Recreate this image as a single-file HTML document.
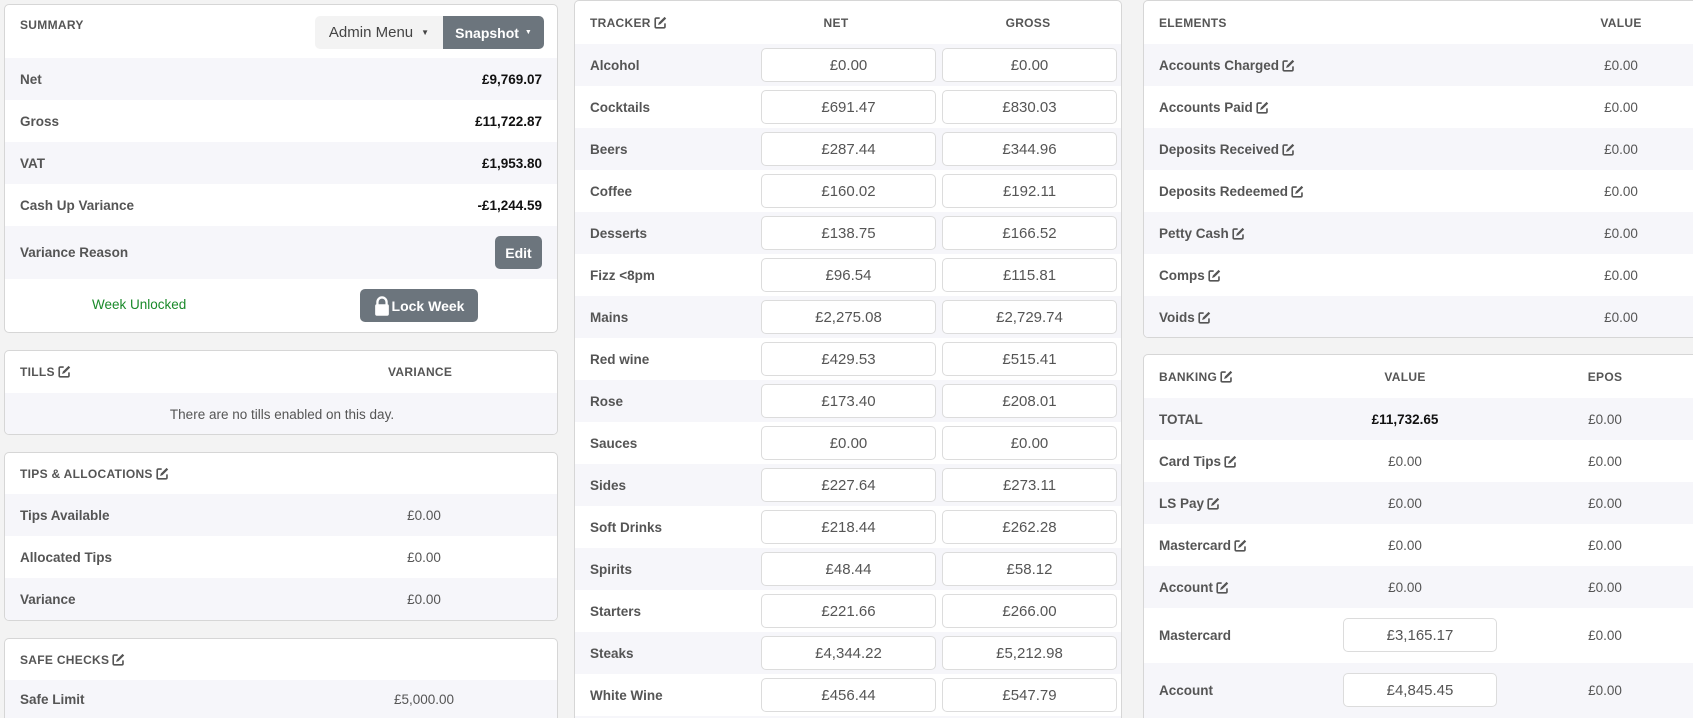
<!DOCTYPE html>
<html style="overflow:hidden;width:1693px;height:718px"><head><meta charset="utf-8"><style>
*{box-sizing:border-box;margin:0;padding:0}
body{width:1693px;height:718px;overflow:hidden;background:#f3f3f3;font-family:"Liberation Sans",sans-serif;color:#555;position:relative}
#wrap{position:absolute;left:0;top:0;width:1693px;height:718px;overflow:hidden}
.card{position:absolute;background:#fff;border:1px solid #d6d6d6;border-radius:5px;overflow:hidden}
.open{border-bottom:none;border-radius:5px 5px 0 0}
.row{position:absolute;left:0;right:0;height:42px;display:flex;align-items:center}
.s{background:#f6f6fa}
.lbl{position:absolute;left:15px;font-weight:bold;font-size:13.5px;color:#555;white-space:nowrap}
.hd{position:absolute;font-weight:bold;font-size:12px;color:#555;letter-spacing:.3px;white-space:nowrap}
.v{position:absolute;font-size:13.5px;color:#555;white-space:nowrap;transform:translateX(-50%)}
.vr{position:absolute;right:15px;font-weight:bold;font-size:13.5px;color:#111}
.inp{position:absolute;top:4px;height:34px;border:1px solid #dcdcdc;border-radius:5px;background:#fff;font-size:15px;color:#555;display:flex;align-items:center;justify-content:center}
.btn{position:absolute;border-radius:5px;background:#6c757d;color:#fff;font-weight:bold;font-size:14px;display:flex;align-items:center;justify-content:center}
svg.e{width:13px;height:13px;vertical-align:-2px;margin-left:3px}
</style></head><body><div id="wrap">
<svg width="0" height="0" style="position:absolute"><defs><symbol id="ed" viewBox="0 0 16 16"><path d="M7 2.5H3a1.5 1.5 0 0 0-1.5 1.5v9A1.5 1.5 0 0 0 3 14.5h9a1.5 1.5 0 0 0 1.5-1.5V9" fill="none" stroke="#555" stroke-width="2"/><path d="M13 1l2 2-7 7-3 1 1-3z" fill="#555"/></symbol></defs></svg>

<div class="card" style="left:4px;top:4px;width:554px;height:329px">
 <div class="hd" style="left:15px;top:13px">SUMMARY</div>
 <div style="position:absolute;left:310px;top:11px;width:128px;height:33px;background:#f3f3f3;border-radius:5px 0 0 5px;font-size:15px;color:#444;display:flex;align-items:center;justify-content:center">Admin Menu <span style="font-size:8px;margin-left:8px">▼</span></div>
 <div class="btn" style="left:438px;top:11px;width:101px;height:33px;border-radius:0 5px 5px 0">Snapshot <span style="font-size:7px;margin-left:6px">▼</span></div>
 <div class="row s" style="top:53px"><span class="lbl">Net</span><span class="vr">£9,769.07</span></div>
 <div class="row" style="top:95px"><span class="lbl">Gross</span><span class="vr">£11,722.87</span></div>
 <div class="row s" style="top:137px"><span class="lbl">VAT</span><span class="vr">£1,953.80</span></div>
 <div class="row" style="top:179px"><span class="lbl">Cash Up Variance</span><span class="vr">-£1,244.59</span></div>
 <div class="row s" style="top:221px;height:53px"><span class="lbl">Variance Reason</span><div class="btn" style="right:15px;top:10px;width:47px;height:33px">Edit</div></div>
 <div style="position:absolute;left:87px;top:292px;font-size:13.5px;color:#1a8a2a">Week Unlocked</div>
 <div class="btn" style="left:355px;top:284px;width:118px;height:33px"><svg width="16" height="20" viewBox="0 0 14 17" style="margin-right:2px"><path d="M3 8V5a4 4 0 0 1 8 0v3" fill="none" stroke="#fff" stroke-width="2"/><rect x="1" y="7" width="12" height="10" rx="1.5" fill="#fff"/></svg>Lock Week</div>
</div>

<div class="card" style="left:4px;top:350px;width:554px;height:85px">
 <div class="hd" style="left:15px;top:14px">TILLS<svg class="e"><use href="#ed"/></svg></div>
 <div class="hd" style="left:383px;top:14px">VARIANCE</div>
 <div class="row s" style="top:42px"><span class="v" style="left:277px;font-size:13.5px">There are no tills enabled on this day.</span></div>
</div>

<div class="card" style="left:4px;top:452px;width:554px;height:169px">
 <div class="hd" style="left:15px;top:14px">TIPS &amp; ALLOCATIONS<svg class="e"><use href="#ed"/></svg></div>
 <div class="row s" style="top:41px"><span class="lbl">Tips Available</span><span class="v" style="left:419px">£0.00</span></div>
 <div class="row" style="top:83px"><span class="lbl">Allocated Tips</span><span class="v" style="left:419px">£0.00</span></div>
 <div class="row s" style="top:125px"><span class="lbl">Variance</span><span class="v" style="left:419px">£0.00</span></div>
</div>

<div class="card open" style="left:4px;top:638px;width:554px;height:80px">
 <div class="hd" style="left:15px;top:14px">SAFE CHECKS<svg class="e"><use href="#ed"/></svg></div>
 <div class="row s" style="top:41px;height:39px"><span class="lbl">Safe Limit</span><span class="v" style="left:419px">£5,000.00</span></div>
</div>

<div class="card open" style="left:574px;top:0px;width:548px;height:718px">
 <div class="hd" style="left:15px;top:15px">TRACKER<svg class="e"><use href="#ed"/></svg></div>
 <div class="hd" style="left:261px;top:15px;transform:translateX(-50%)">NET</div>
 <div class="hd" style="left:453px;top:15px;transform:translateX(-50%)">GROSS</div>
 <div class="row s" style="top:43px"><span class="lbl">Alcohol</span><div class="inp" style="left:186px;width:175px">£0.00</div><div class="inp" style="left:367px;width:175px">£0.00</div></div>
 <div class="row" style="top:85px"><span class="lbl">Cocktails</span><div class="inp" style="left:186px;width:175px">£691.47</div><div class="inp" style="left:367px;width:175px">£830.03</div></div>
 <div class="row s" style="top:127px"><span class="lbl">Beers</span><div class="inp" style="left:186px;width:175px">£287.44</div><div class="inp" style="left:367px;width:175px">£344.96</div></div>
 <div class="row" style="top:169px"><span class="lbl">Coffee</span><div class="inp" style="left:186px;width:175px">£160.02</div><div class="inp" style="left:367px;width:175px">£192.11</div></div>
 <div class="row s" style="top:211px"><span class="lbl">Desserts</span><div class="inp" style="left:186px;width:175px">£138.75</div><div class="inp" style="left:367px;width:175px">£166.52</div></div>
 <div class="row" style="top:253px"><span class="lbl">Fizz &lt;8pm</span><div class="inp" style="left:186px;width:175px">£96.54</div><div class="inp" style="left:367px;width:175px">£115.81</div></div>
 <div class="row s" style="top:295px"><span class="lbl">Mains</span><div class="inp" style="left:186px;width:175px">£2,275.08</div><div class="inp" style="left:367px;width:175px">£2,729.74</div></div>
 <div class="row" style="top:337px"><span class="lbl">Red wine</span><div class="inp" style="left:186px;width:175px">£429.53</div><div class="inp" style="left:367px;width:175px">£515.41</div></div>
 <div class="row s" style="top:379px"><span class="lbl">Rose</span><div class="inp" style="left:186px;width:175px">£173.40</div><div class="inp" style="left:367px;width:175px">£208.01</div></div>
 <div class="row" style="top:421px"><span class="lbl">Sauces</span><div class="inp" style="left:186px;width:175px">£0.00</div><div class="inp" style="left:367px;width:175px">£0.00</div></div>
 <div class="row s" style="top:463px"><span class="lbl">Sides</span><div class="inp" style="left:186px;width:175px">£227.64</div><div class="inp" style="left:367px;width:175px">£273.11</div></div>
 <div class="row" style="top:505px"><span class="lbl">Soft Drinks</span><div class="inp" style="left:186px;width:175px">£218.44</div><div class="inp" style="left:367px;width:175px">£262.28</div></div>
 <div class="row s" style="top:547px"><span class="lbl">Spirits</span><div class="inp" style="left:186px;width:175px">£48.44</div><div class="inp" style="left:367px;width:175px">£58.12</div></div>
 <div class="row" style="top:589px"><span class="lbl">Starters</span><div class="inp" style="left:186px;width:175px">£221.66</div><div class="inp" style="left:367px;width:175px">£266.00</div></div>
 <div class="row s" style="top:631px"><span class="lbl">Steaks</span><div class="inp" style="left:186px;width:175px">£4,344.22</div><div class="inp" style="left:367px;width:175px">£5,212.98</div></div>
 <div class="row" style="top:673px"><span class="lbl">White Wine</span><div class="inp" style="left:186px;width:175px">£456.44</div><div class="inp" style="left:367px;width:175px">£547.79</div></div>
 <div class="row s" style="top:715px;height:3px"></div>
</div>

<div class="card" style="left:1143px;top:0px;width:550px;height:338px;border-right:none;border-radius:5px 0 0 5px">
 <div class="hd" style="left:15px;top:15px">ELEMENTS</div>
 <div class="hd" style="left:477px;top:15px;transform:translateX(-50%)">VALUE</div>
 <div class="row s" style="top:43px"><span class="lbl">Accounts Charged<svg class="e"><use href="#ed"/></svg></span><span class="v" style="left:477px">£0.00</span></div>
 <div class="row" style="top:85px"><span class="lbl">Accounts Paid<svg class="e"><use href="#ed"/></svg></span><span class="v" style="left:477px">£0.00</span></div>
 <div class="row s" style="top:127px"><span class="lbl">Deposits Received<svg class="e"><use href="#ed"/></svg></span><span class="v" style="left:477px">£0.00</span></div>
 <div class="row" style="top:169px"><span class="lbl">Deposits Redeemed<svg class="e"><use href="#ed"/></svg></span><span class="v" style="left:477px">£0.00</span></div>
 <div class="row s" style="top:211px"><span class="lbl">Petty Cash<svg class="e"><use href="#ed"/></svg></span><span class="v" style="left:477px">£0.00</span></div>
 <div class="row" style="top:253px"><span class="lbl">Comps<svg class="e"><use href="#ed"/></svg></span><span class="v" style="left:477px">£0.00</span></div>
 <div class="row s" style="top:295px"><span class="lbl">Voids<svg class="e"><use href="#ed"/></svg></span><span class="v" style="left:477px">£0.00</span></div>
</div>

<div class="card open" style="left:1143px;top:354px;width:550px;height:364px;border-right:none;border-radius:5px 0 0 0">
 <div class="hd" style="left:15px;top:15px">BANKING<svg class="e"><use href="#ed"/></svg></div>
 <div class="hd" style="left:261px;top:15px;transform:translateX(-50%)">VALUE</div>
 <div class="hd" style="left:461px;top:15px;transform:translateX(-50%)">EPOS</div>
 <div class="row s" style="top:43px"><span class="lbl">TOTAL</span><span class="v" style="left:261px;font-weight:bold;color:#111">£11,732.65</span><span class="v" style="left:461px">£0.00</span></div>
 <div class="row" style="top:85px"><span class="lbl">Card Tips<svg class="e"><use href="#ed"/></svg></span><span class="v" style="left:261px">£0.00</span><span class="v" style="left:461px">£0.00</span></div>
 <div class="row s" style="top:127px"><span class="lbl">LS Pay<svg class="e"><use href="#ed"/></svg></span><span class="v" style="left:261px">£0.00</span><span class="v" style="left:461px">£0.00</span></div>
 <div class="row" style="top:169px"><span class="lbl">Mastercard<svg class="e"><use href="#ed"/></svg></span><span class="v" style="left:261px">£0.00</span><span class="v" style="left:461px">£0.00</span></div>
 <div class="row s" style="top:211px"><span class="lbl">Account<svg class="e"><use href="#ed"/></svg></span><span class="v" style="left:261px">£0.00</span><span class="v" style="left:461px">£0.00</span></div>
 <div class="row" style="top:253px;height:55px"><span class="lbl">Mastercard</span><div class="inp" style="left:199px;width:154px;top:10px">£3,165.17</div><span class="v" style="left:461px">£0.00</span></div>
 <div class="row s" style="top:308px;height:55px"><span class="lbl">Account</span><div class="inp" style="left:199px;width:154px;top:10px">£4,845.45</div><span class="v" style="left:461px">£0.00</span></div>
</div>
</div></body></html>
